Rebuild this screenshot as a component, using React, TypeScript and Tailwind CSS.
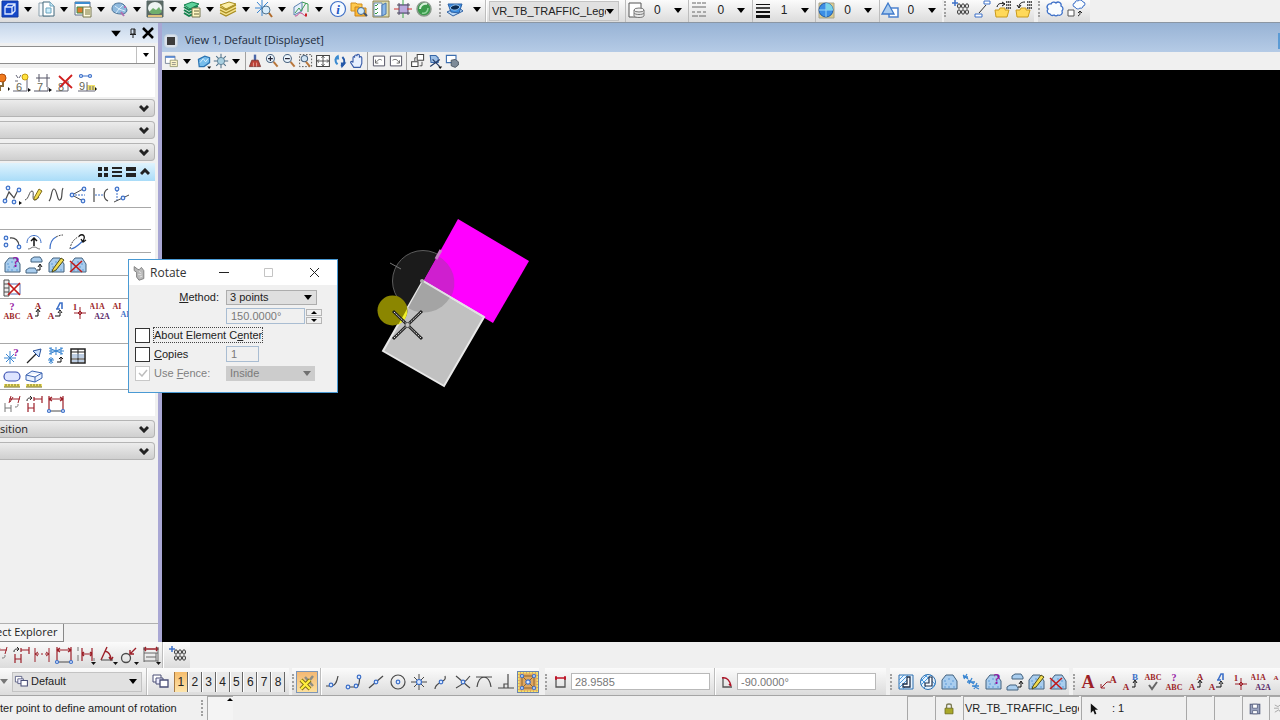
import { useState } from 'react'
import type { ReactNode } from 'react'

const B = '#3d70c8'
const R = '#9c1f28'
const K = '#4a4a4a'

const dot = (x: number, y: number, r = 1.8) => (
  <circle cx={x} cy={y} r={r} fill="#dbe9ff" stroke={B} strokeWidth={1.2} />
)

const label = (x: number, y: number, t: string, size = 9, fill = R) => (
  <text x={x} y={y} fontSize={size} fontWeight="bold" fill={fill} stroke="none" fontFamily="Liberation Serif, serif" textAnchor="middle">
    {t}
  </text>
)

const cloth = <path d="M3 17V8l4-5h7l4 6v8z" fill="#a9cdee" stroke="#44627f" />
const clothDots = <path d="M5 9h2M9 7h2M13 9h2M6 12h2M11 12h2M5 15h2M9 15h2M14 15h2" stroke="#5f9bd8" strokeDasharray="2 1" />

const threes = (x: number, y: number) => (
  <g stroke="#333">
    {[0, 4, 8].map((d) => (
      <g key={d}>
        <ellipse cx={x + d} cy={y} rx={1.5} ry={2.2} />
        <ellipse cx={x + d} cy={y + 6} rx={1.5} ry={2.2} />
      </g>
    ))}
  </g>
)

const folder = <path d="M2 11h4l1-2h5v2h4l-2 7H3z" fill="#ffd95a" stroke="#c99a1c" />
const smallGrid = <path d="M13 3h5M13 6h5M13 9h5" stroke="#555" strokeWidth={2} strokeDasharray="1.5 0.5" />

// All glyphs are drawn on a 20 x 20 grid
const GLYPHS: Record<string, ReactNode> = {
  cube: (
    <>
      <path d="M2 2h16v16H2z" fill="#1648c8" stroke="#1038a0" />
      <path d="M5 8h7v7H5zM5 8l3-3h7v7l-3 3M12 8l3-3" stroke="#dfe9ff" strokeWidth={1.3} />
    </>
  ),
  newFile: (
    <>
      <path d="M3 4h11v13H3z" fill="#f4f8fb" stroke="#8ba0ad" />
      <path d="M7 3h7l4 4v10H7z" fill="#fff" stroke="#41697d" />
      <path d="M14 3v4h4M10 9h5v5h-5z" fill="#cdeefc" stroke="#6aa4be" />
    </>
  ),
  models: (
    <>
      <path d="M2 3h15v13H2z" fill="#fff" stroke="#61718b" />
      <path d="M2 4h15" stroke="#3e8dcf" strokeWidth={2} />
      <path d="M4 8h6v6H4z" fill="#df7b2d" stroke="#3c8f48" />
      <path d="M10 8h8v10h-8z" fill="#fffbe0" stroke="#77764e" />
      <path d="M12 11h5M12 13h5M12 15h5" stroke="#76743b" />
    </>
  ),
  gem: (
    <>
      <path d="M3 10c0-4 3-6 7-6s7 3 8 7c0 3-3 4-6 4s-9-1-9-5z" fill="#8fb9dd" stroke="#4b7398" />
      <path d="M6 7l4 3 4-4M10 10l-3 4M10 10l6 2" stroke="#d8edfb" />
      <path d="M12 13l3 4M15 8h2" stroke="#b06fb0" strokeWidth={2} />
    </>
  ),
  raster: (
    <>
      <path d="M2 2h16v16H2z" fill="#5c6a64" stroke="#566" />
      <ellipse cx={10} cy={9} rx={7} ry={6} fill="#eef4f2" stroke="none" />
      <path d="M4 13l4-4 3 2 3-3 3 5-3 2H7z" fill="#6fae6c" stroke="none" />
      <path d="M3 17h14" stroke="#e0c07c" strokeWidth={2} />
    </>
  ),
  levelsGreen: (
    <>
      <path d="M2 14l5 3 9-4M2 11l5 3 9-4M2 8l5 3 9-4" stroke="#15824e" strokeWidth={2} />
      <path d="M2 6l8-3 7 2-9 5z" fill="#5ed29b" stroke="#15824e" />
      <path d="M10 9h8v9h-8z" fill="#fff6c0" stroke="#777651" />
      <path d="M12 12h5M12 15h5" stroke="#66653e" />
    </>
  ),
  levelsYellow: (
    <>
      <path d="M2 14l6 3 10-5v-7H2z" fill="#f3e08a" stroke="none" />
      <path d="M2 14l6 3 10-5M2 11l6 3 10-5M2 8l6 3 10-5" stroke="#a78c20" strokeWidth={1.2} />
      <path d="M2 6l9-3 7 2-10 5z" fill="#fbeea6" stroke="#a78c20" />
    </>
  ),
  starSearch: (
    <>
      <path d="M8 1v16M1 9h14M3 3l10 11M14 3L3 14" stroke="#3a86d2" />
      <circle cx={12} cy={11} r={4} fill="#d7ecfb" stroke="#4f7390" />
      <path d="M15 14l3 4" stroke="#b06a2a" strokeWidth={2} />
    </>
  ),
  sketch: (
    <>
      <path d="M3 16V8l8-5v9z" fill="#e4effa" stroke="#5c83af" />
      <path d="M11 3l6 2v8M4 14l4-5 2 3 5-8" stroke="#3d9d55" />
      <path d="M4 17c4 0 3-4 6-3s3 4 6 2" stroke="#c03c8c" />
      <path d="M14 16h2" stroke="#c22" strokeWidth={3} />
    </>
  ),
  info: (
    <>
      <circle cx={10} cy={10} r={7.5} fill="#f5f9ff" stroke="#3f70c6" strokeWidth={1.2} />
      <text x={10} y={15} fontSize={13} fontStyle="italic" fontWeight="bold" fill="#2257c4" stroke="none" textAnchor="middle" fontFamily="Liberation Serif, serif">
        i
      </text>
    </>
  ),
  folderSearch: (
    <>
      <path d="M2 4h5l1 1h5v7H2z" fill="#ffc94f" stroke="#d28f1c" />
      <path d="M6 8h4l1 1h6v8H6z" fill="#ffb833" stroke="#c8841c" />
      <circle cx={12} cy={12} r={3.5} fill="#cfe9fa" stroke="#4e6d92" />
      <path d="M15 14l3 3" stroke="#44536a" strokeWidth={2} />
    </>
  ),
  checklist: (
    <>
      <path d="M2 2h16v16H2z" fill="#dcdcb0" stroke="#8d7f48" />
      <path d="M3 4h8v13H3z" fill="#fafcff" stroke="#6a8bb0" />
      <path d="M4 6l1 1 2-2M4 10l1 1 2-2M4 14l1 1 2-2" stroke="#2f9a3c" />
      <path d="M11 6l4-2v11l-4 2z" fill="#8ab7e8" stroke="#4d79b0" />
    </>
  ),
  hash: (
    <>
      <path d="M6 5h9v10H6z" fill="#b9a9dd" stroke="none" />
      <path d="M6 4v12M15 4v12M4 6h13M4 14h13" stroke="#4f4a60" />
      <path d="M10 1v5M10 14v5" stroke="#3aa648" />
      <path d="M1 10h5M14 10h5" stroke="#c33" />
    </>
  ),
  greenBall: (
    <>
      <circle cx={10} cy={10} r={7} fill="#3a9a4b" stroke="#8b9a8d" strokeWidth={1.5} />
      <path d="M6 10c0-4 4-6 7-5" stroke="#d6f2da" strokeWidth={2} />
      <path d="M8 14c3 1 6-1 6-5" stroke="#8fd59b" strokeWidth={1.5} />
    </>
  ),
  eye: (
    <>
      <path d="M2 13l6 4 10-5-5-4z" fill="#b8d6f4" stroke="#2f62a5" />
      <path d="M3 5h14l-3 9-8-1z" fill="#3b8de0" stroke="#2f62a5" />
      <path d="M5 9c3-4 8-4 10-1-3 4-7 4-10 1z" fill="#0b2b52" stroke="#9cc8f2" />
    </>
  ),
  sheetDisk: (
    <>
      <path d="M3 3h12v14H3z" fill="#fff" stroke="#555" />
      <path d="M8 10v6c1 2 9 2 10 0v-6" fill="#e8e8e8" stroke="#777" />
      <ellipse cx={13} cy={10} rx={5} ry={2} fill="#f2f2f2" stroke="#777" />
      <path d="M8 13c1 2 9 2 10 0" stroke="#777" />
    </>
  ),
  dashes: <path d="M3 3h4m1 0h4m1 0h4M3 7h14M3 12h3m2 0h4m2 0h3M3 16h6m1 0h7" stroke="#666" />,
  weights: (
    <g stroke="#111">
      <path d="M3 4.500h14" />
      <path d="M3 8h14" strokeWidth={1.5} />
      <path d="M3 12h14" strokeWidth={2} />
      <path d="M3 16.500h14" strokeWidth={3} />
    </g>
  ),
  sphere: (
    <>
      <path d="M3 3h15v15H3z" fill="#dccb8c" stroke="#a8a48c" />
      <circle cx={10} cy={10} r={7} fill="#3c8ee4" stroke="#225ca8" />
      <path d="M10 3v14M3 10h14" stroke="#9cd8f6" />
      <path d="M10 3a7 7 0 0 1 7 7h-7z" fill="#79d4e8" stroke="none" />
    </>
  ),
  triangle: (
    <>
      <path d="M9 8h9v9H9z" fill="#fff" stroke="#4d83cf" strokeWidth={1.5} />
      <path d="M2 14L8 3l6 11z" fill="#a9cbef" stroke="#3f7acb" strokeWidth={1.3} />
    </>
  ),
  groupStar: (
    <>
      <path d="M4 1v6M1 4h6" stroke={B} strokeWidth={1.5} />
      {threes(8, 7)}
    </>
  ),
  link: (
    <>
      <path d="M3 15h7v3H3zM12 2h6v3h-6z" fill="#fff" stroke={B} />
      <path d="M7 14l7-8" stroke="#333" />
    </>
  ),
  folderIn: (
    <>
      {folder}
      {smallGrid}
      <path d="M4 8c1-4 4-4 7-3M9 3l3 2-3 2" stroke="#111" />
    </>
  ),
  folderOut: (
    <>
      {folder}
      {smallGrid}
      <path d="M11 3C7 3 5 5 5 8M3 6l2 3 2-3" stroke="#111" />
    </>
  ),
  cloud: (
    <path
      d="M5 15a3 3 0 0 1-2-5 3 3 0 0 1 3-5 3 3 0 0 1 5-1 3 3 0 0 1 5 3 3 3 0 0 1 1 5 3 3 0 0 1-4 4 3 3 0 0 1-4 0 3 3 0 0 1-4-1z"
      fill="#fafdff"
      stroke={B}
      strokeWidth={1.3}
    />
  ),
  cloudBox: (
    <>
      <path d="M9 8a2 2 0 0 1 0-4 2 2 0 0 1 3-2 3 3 0 0 1 5 1 2 2 0 0 1 0 4 2 2 0 0 1-3 2 3 3 0 0 1-5-1z" fill="#fafdff" stroke={B} />
      <path d="M2 11h6v6H2z" fill="#fff" stroke="#555" />
      <path d="M12 17c2-1 2-2 2-4M12 14l2-2 2 2" stroke="#222" />
    </>
  ),
  viewSheet: (
    <>
      <path d="M3 4h12v9H3z" fill="#fff" stroke="#66748c" />
      <path d="M3 5h12" stroke="#4a7fd0" strokeWidth={2} />
      <path d="M9 9h9v8H9z" fill="#fff7c9" stroke="#8a8f66" />
      <path d="M11 12h5M11 14.500h5" stroke="#777" />
    </>
  ),
  style: (
    <>
      <path d="M3 8l8-4 6 2v6l-7 5H4z" fill="#77bdeb" stroke="#2c74b2" strokeWidth={1.5} />
      <path d="M5 12l4-5 3 4 3-4" stroke="#e9f8ff" />
      <path d="M14 17h5l-2.500 3z" fill="#111" stroke="none" />
    </>
  ),
  sun: (
    <>
      <path d="M10 1v18M1 10h18M4 4l12 12M16 4L4 16" stroke="#4d6f88" strokeWidth={1.3} />
      <circle cx={10} cy={10} r={4.5} fill="#a8cfe0" stroke="#56788e" />
    </>
  ),
  brush: (
    <>
      <path d="M10 2v8" stroke="#4b67a8" strokeWidth={3} />
      <path d="M6 9h8l3 8H3z" fill="#bb4238" stroke="#74302c" />
      <path d="M8 12v5M12 12v5" stroke="#efb6ae" />
    </>
  ),
  zoomIn: (
    <>
      <circle cx={8} cy={7} r={5} fill="#eaf4fc" stroke="#4b6480" strokeWidth={1.3} />
      <path d="M8 4v6M5 7h6" stroke="#223" strokeWidth={1.5} />
      <path d="M12 11l5 6" stroke="#b9773c" strokeWidth={2.5} />
    </>
  ),
  zoomOut: (
    <>
      <circle cx={8} cy={7} r={5} fill="#eaf4fc" stroke="#4b6480" strokeWidth={1.3} />
      <path d="M5 7h6" stroke="#223" strokeWidth={1.5} />
      <path d="M12 11l5 6" stroke="#b9773c" strokeWidth={2.5} />
    </>
  ),
  zoomArea: (
    <>
      <path d="M2 2h15v15H2z" stroke="#333" strokeDasharray="2 2" />
      <circle cx={8} cy={7} r={4} fill="#cfe3f3" stroke="#4b6480" strokeWidth={1.3} />
      <path d="M10 11l5 6" stroke="#b9773c" strokeWidth={2.5} />
    </>
  ),
  fit: (
    <>
      <path d="M2 3h16v14H2z" fill="#fff" stroke="#444" strokeWidth={1.3} />
      <path d="M10 4v12M3 10h14M8 6l2-2 2 2M8 14l2 2 2-2M5 8l-2 2 2 2M15 8l2 2-2 2" stroke="#333" />
    </>
  ),
  rotateView: (
    <>
      <path d="M8 4c-4 1-5 7-1 10" stroke="#3c8bd0" strokeWidth={2.5} />
      <path d="M3 8l5-6 1 6z" fill="#3c8bd0" stroke="none" />
      <path d="M11 16c5-1 6-7 2-11" stroke="#2458a8" strokeWidth={2.5} />
      <path d="M18 12l-6 7-1-7z" fill="#2458a8" stroke="none" />
    </>
  ),
  hand: (
    <path
      d="M6 18l-4-6c0-2 2-2 3 0V6c0-2 2-2 2 0V4c0-2 3-2 3 0V3c0-2 3-2 3 0v3c0-2 3-2 3 0v7l-2 5z"
      fill="#e9f1ff"
      stroke="#3a5da8"
      strokeWidth={1.4}
    />
  ),
  viewPrev: (
    <>
      <path d="M2 3h16v14H2z" fill="#fff" stroke="#556" strokeWidth={1.4} />
      <path d="M5 13V8M5 13h4M6 12c3-5 6-5 8-3" stroke="#333" />
    </>
  ),
  viewNext: (
    <>
      <path d="M2 3h16v14H2z" fill="#fff" stroke="#556" strokeWidth={1.4} />
      <path d="M15 13V9M15 13h-4M14 12c-2-5-6-5-9-3" stroke="#333" />
    </>
  ),
  copyView: (
    <>
      <path d="M9 2h8v7H9zM2 11h8v6H2z" fill="#fff" stroke="#444" strokeWidth={1.3} />
      <path d="M12 16h3v-5M6 10V6h2" stroke="#333" />
    </>
  ),
  clipView: (
    <>
      <path d="M4 3h7l3 3v6H5z" fill="#9dbfe6" stroke="#3767a8" strokeWidth={1.3} />
      <path d="M4 17L16 8M7 8l9 9" stroke="#223a66" strokeWidth={1.5} />
      <path d="M14 17h5l-2.500 3z" fill="#111" stroke="none" />
    </>
  ),
  maskView: (
    <>
      <path d="M3 3h12v9H3z" fill="#fff" stroke="#3e6fb0" strokeWidth={1.4} />
      <path d="M9 9l5-1 4 3v4l-4 3-5-2z" fill="#7e8b98" stroke="#3f4954" />
    </>
  ),
  bulb6: (
    <>
      <path d="M1 18h14V6M4 2l2 3M9 2L7 5M3 8h3" stroke="#667" />
      <circle cx={13} cy={4} r={3} fill="#ffe13c" stroke="#c39a12" />
      <text x={7} y={18} fontSize={11} fill="#665" stroke="none" textAnchor="middle" fontFamily="Liberation Sans">6</text>
      <path d="M16 15l3 2-3 2z" fill="#111" stroke="none" />
    </>
  ),
  fence7: (
    <>
      <path d="M3 5h14M6 1v8M14 1v13M1 18h14v-4" stroke="#556" />
      <text x={7} y={18} fontSize={11} fill="#665" stroke="none" textAnchor="middle" fontFamily="Liberation Sans">7</text>
      <path d="M16 15l3 2-3 2z" fill="#111" stroke="none" />
    </>
  ),
  delete8: (
    <>
      <path d="M1 18h12V8" stroke="#667" />
      <text x={6} y={18} fontSize={11} fill="#665" stroke="none" textAnchor="middle" fontFamily="Liberation Sans">8</text>
      <path d="M4 3l13 12M17 2L5 14" stroke="#d01f1f" strokeWidth={1.8} />
    </>
  ),
  ruler9: (
    <>
      <path d="M5 3h7" stroke={B} />
      {dot(4, 3, 1.5)}
      {dot(13, 3, 1.5)}
      <path d="M10 12h8v5h-8z" fill="#efe06b" stroke="none" />
      <path d="M1 18h17M10 9v9M13 13v4M16 13v4" stroke="#667" />
      <text x={5} y={17} fontSize={11} fill="#665" stroke="none" textAnchor="middle" fontFamily="Liberation Sans">9</text>
      <path d="M18 14l2 2-2 2z" fill="#111" stroke="none" />
    </>
  ),
  orangeBall: (
    <>
      <circle cx={12} cy={5} r={4} fill="#f07a1c" stroke="#b04b0c" />
      <path d="M13 9v4h-3v5" stroke="#876a3a" strokeWidth={2} />
      <path d="M18 14l2 2-2 2z" fill="#111" stroke="none" />
    </>
  ),
  polyline: (
    <>
      <path d="M3 16l4-9 5 6 4-8" stroke={K} strokeWidth={1.2} />
      {dot(6, 3)}
      {dot(17, 5)}
      {dot(3, 16)}
      {dot(12, 17)}
      <path d="M17 16l3 2-3 2z" fill="#111" stroke="none" />
    </>
  ),
  pencilLine: (
    <>
      <path d="M1 15c4-1 4-9 7-9s-1 9 3 9c2 0 3-2 4-3" stroke={K} />
      <path d="M10 13l5-9 3 2-5 8-3 1z" fill="#f2dc4e" stroke="#7c6a1c" />
    </>
  ),
  nCurve: <path d="M3 16C6 13 5 4 8 4s3 12 6 11 1-9 3-12" stroke={K} strokeWidth={1.2} />,
  branch: (
    <>
      <path d="M4 10h13" stroke={B} strokeDasharray="2 1" />
      <path d="M15 4L4 10l11 6" stroke={K} />
      {dot(16, 4)}
      {dot(4, 10)}
      {dot(15, 16)}
    </>
  ),
  bisect: (
    <>
      <path d="M4 3v14M18 4c-5 2-5 10 0 12" stroke={K} strokeWidth={1.2} />
      <path d="M5 10h9" stroke={B} strokeDasharray="2 1" />
    </>
  ),
  perp: (
    <>
      <path d="M5 5v12" stroke={B} strokeDasharray="2 1" />
      <path d="M2 17l15-7" stroke={K} />
      {dot(5, 4)}
      {dot(11, 13)}
    </>
  ),
  arc3: (
    <>
      <path d="M8 6c5-1 9 3 9 8" stroke={K} strokeWidth={1.3} />
      {dot(4, 6)}
      {dot(4, 13)}
      {dot(17, 15)}
    </>
  ),
  arcUp: (
    <>
      <path d="M3 11C3 1 17 1 17 11" stroke={B} />
      <path d="M4 17c3 0 3-2 6-2s3 2 6 2" stroke="#777" />
      <path d="M10 14V7M7 9l3-3 3 3" stroke="#111" strokeWidth={1.5} />
    </>
  ),
  arcExt: (
    <>
      <path d="M4 17C4 11 6 7 10 5" stroke={B} strokeWidth={1.2} />
      <path d="M10 5c2-1 4-2 7-2" stroke={K} strokeDasharray="2 1" />
    </>
  ),
  offset: (
    <>
      <path d="M2 17C3 10 7 6 12 4" stroke={K} strokeDasharray="2 1" />
      <path d="M3 17C8 16 11 12 15 9" stroke={B} strokeWidth={1.2} />
      <path d="M11 4c4-3 7 0 4 5M13 7l2 3 3-2" stroke="#111" strokeWidth={1.3} />
    </>
  ),
  cloth: (
    <>
      {cloth}
      {clothDots}
    </>
  ),
  clothQ: (
    <>
      {cloth}
      {clothDots}
      {label(14, 12, '?', 14, '#9314a3')}
    </>
  ),
  clothUp: (
    <>
      <path d="M7 7V4l3-2h6l2 3v2zM2 18v-3l3-2h6l2 3v2z" fill="#a9cdee" stroke="#44627f" />
      <path d="M13 15h3v-5M14 12l2-3 2 3" stroke="#111" />
    </>
  ),
  clothPen: (
    <>
      {cloth}
      {clothDots}
      <path d="M7 14l8-11 3 2-8 10-4 2z" fill="#f2dc4e" stroke="#4d4a1c" />
    </>
  ),
  clothX: (
    <>
      {cloth}
      {clothDots}
      <path d="M2 6l12 11M14 6L2 17" stroke="#c01a1a" strokeWidth={1.6} />
    </>
  ),
  gridX: (
    <>
      <path d="M2 2h5v16H2zM2 6h5M2 10h5M2 14h5" fill="#eee" stroke={K} />
      <path d="M7 6h11v10H7" stroke="#5a6cb0" />
      <path d="M6 5l12 12M18 5L6 17" stroke="#c01a1a" strokeWidth={1.7} />
    </>
  ),
  abcQ: (
    <>
      {label(10, 9, '?', 10, '#9314a3')}
      {label(10, 18, 'ABC', 8)}
    </>
  ),
  aUp: (
    <>
      {label(14, 8, 'A', 9)}
      {label(6, 18, 'A', 9)}
      <path d="M11 15h3V9M12 11l2-3 2 3" stroke="#111" />
    </>
  ),
  aMatch: (
    <>
      {label(5, 18, 'A', 9)}
      <path d="M11 8l3-6h2v6M10 8h4" stroke={B} strokeWidth={1.6} />
      <path d="M9 15h5v-4M12 12l2-3 2 3" stroke="#111" />
    </>
  ),
  bUp: (
    <>
      {label(14, 8, 'B', 9, B)}
      {label(5, 18, 'A', 9)}
      <path d="M11 15h3V9M12 11l2-3 2 3" stroke="#111" />
    </>
  ),
  oneTarget: (
    <>
      {label(7, 9, '1', 9)}
      <path d="M12 6v12M6 12h12M10 12l2-2 2 2-2 2z" fill="#fff" stroke={R} />
    </>
  ),
  a1a2: (
    <>
      {label(7, 8, 'A1A', 8)}
      {label(12, 18, 'A2A', 8, '#5a2a6a')}
    </>
  ),
  a1a1: (
    <>
      {label(5, 8, 'AI', 8)}
      {label(13, 16, 'AI', 8, B)}
    </>
  ),
  aEdge: label(4, 8, 'A', 7),
  bigA: label(10, 16, 'A', 18),
  aLeader: (
    <>
      {label(14, 11, 'A', 10)}
      <path d="M2 16l6-6h3M2 12v4h4" stroke={R} />
    </>
  ),
  abcCheck: (
    <>
      {label(10, 8, 'ABC', 8)}
      <path d="M6 13l3 4 5-7" stroke="#666" strokeWidth={2} />
    </>
  ),
  starQ: (
    <>
      <path d="M8 5v13M2 12h12M4 8l8 8M12 8l-8 8" stroke="#3a86d2" />
      {label(14, 10, '?', 11, '#9314a3')}
    </>
  ),
  arrowBox: (
    <>
      <path d="M3 17L13 7" stroke="#222" strokeWidth={1.3} />
      <path d="M9 5l8-2-2 8z" fill="#cfe3ff" stroke="#264f9a" />
    </>
  ),
  starsUp: (
    <>
      <path d="M3 5h15M5 1v8M10 1v8M15 1v8M3 2l14 6M3 8l14-6M5 11v7M2 14h6M3 12l4 5M7 12l-4 5" stroke="#3a86d2" />
      <path d="M11 16h4v-4M13 13l2-2 2 2" stroke="#111" />
    </>
  ),
  table: (
    <>
      <path d="M3 3h14v14H3z" fill="#fff" stroke="#222" strokeWidth={1.5} />
      <path d="M3 6h14M3 13h14M10 3v14" stroke="#222" />
      <path d="M4 9h12M4 11h12M4 15h12" stroke="#7f9ec8" />
    </>
  ),
  pill: (
    <>
      <rect x={2} y={3} width={16} height={9} rx={4.5} fill="#dde4ff" stroke="#3a4fb0" strokeWidth={1.2} />
      <path d="M2 15h16v3H2z" fill="#f0e26a" stroke="none" />
      <path d="M2 18h16M4 15v2M7 15v2M10 15v2M13 15v2M16 15v2" stroke="#777024" />
    </>
  ),
  slab: (
    <>
      <path d="M2 6l6-4 10 2v5l-7 4-9-2zM2 6l9 2 7-4M11 8v5" fill="#e9f1ff" stroke="#3a62b0" />
      <path d="M2 15h16v3H2z" fill="#f0e26a" stroke="none" />
      <path d="M2 18h16M4 15v2M7 15v2M10 15v2M13 15v2M16 15v2" stroke="#777024" />
    </>
  ),
  dimA: (
    <>
      <path d="M9 2l-2 7M18 2l-2 7M7 5h11M11 3l-3 5" stroke={R} />
      <path d="M3 9v9M9 11v7M3 14h6M13 13c3 0 3-1 3-3" stroke="#777" />
    </>
  ),
  dimB: (
    <>
      <path d="M10 5h8M18 2v7M10 3v4M4 9v9M10 9v9M4 14h6" stroke={R} strokeWidth={1.2} />
      <path d="M3 7c0-3 2-3 4-3M6 2l2 2-2 2" stroke="#222" />
    </>
  ),
  dimC: <path d="M3 3v14M17 3v14M3 9h4m2 0h2m2 0h4M6 7L3 9l3 2M14 7l3 2-3 2" stroke={R} />,
  dimBox: (
    <>
      <path d="M3 2v15M17 2v15M3 5h14M6 3L3 5l3 2M14 3l3 2-3 2" stroke={R} strokeWidth={1.2} />
      <path d="M3 17h14" stroke={K} />
      {dot(3, 17, 1.5)}
      {dot(17, 17, 1.5)}
    </>
  ),
  dimD: (
    <>
      <path d="M6 3v13M16 3v13M6 9h10M8 7L6 9l2 2M14 7l2 2-2 2" stroke={R} strokeWidth={1.2} />
      <path d="M2 2v4M2 10v6M18 13v3" stroke="#777" />
      <path d="M15 17h5l-2.500 3z" fill="#111" stroke="none" />
    </>
  ),
  dimAngle: (
    <>
      <path d="M3 15L9 2M7 6c4 1 6 5 6 9M11 12l2 3 2-3" stroke={R} strokeWidth={1.4} />
      <path d="M3 15h12" stroke={K} />
      <path d="M15 17h5l-2.500 3z" fill="#111" stroke="none" />
    </>
  ),
  dimRadius: (
    <>
      <circle cx={7} cy={13} r={4.5} stroke={K} strokeWidth={1.3} />
      <path d="M17 3l-6 6M11 5v4h4" stroke={R} strokeWidth={1.4} />
      <path d="M15 17h5l-2.500 3z" fill="#111" stroke="none" />
    </>
  ),
  dimOrd: (
    <>
      <path d="M3 4h14M5 2L3 4l2 2M15 2l2 2-2 2" stroke={R} strokeWidth={1.3} />
      <path d="M3 2v15M17 2v15M3 8h14M5 12h10M3 16h14M15 8v8" stroke="#666" />
      <path d="M15 17h5l-2.500 3z" fill="#111" stroke="none" />
    </>
  ),
  layers: (
    <>
      <path d="M3 3h8v7H3z" fill="#fff" stroke="#4a4f77" />
      <path d="M6 6h7v6H6z" fill="#eef" stroke="#4a4f77" />
      <path d="M10 8h8v7h-8z" fill="#fff" stroke="#4a4f77" strokeWidth={1.3} />
    </>
  ),
  snapX: (
    <>
      <path d="M8 5l8 9M16 4l-7 9" stroke="#8d8d85" strokeWidth={2.5} />
      <path d="M4 8l9 9M13 8l-9 9" stroke="#796a10" strokeWidth={4} />
      <path d="M4 8l9 9M13 8l-9 9" stroke="#ffee3c" strokeWidth={2.4} />
    </>
  ),
  snapNear: (
    <>
      <path d="M3 14h6c4-1 5-5 6-10" stroke={K} strokeWidth={1.2} />
      {dot(8, 13)}
    </>
  ),
  snapKey: (
    <>
      <path d="M4 15h9c3-2 2-7 3-10" stroke={K} strokeWidth={1.2} />
      {dot(4, 15)}
      {dot(12, 14)}
      {dot(15, 5)}
    </>
  ),
  snapMid: (
    <>
      <path d="M3 16L17 4" stroke={K} strokeWidth={1.3} />
      {dot(10, 10)}
    </>
  ),
  snapCenter: (
    <>
      <circle cx={10} cy={10} r={7} stroke={K} strokeWidth={1.2} />
      {dot(10, 10)}
    </>
  ),
  snapOrigin: (
    <>
      <path d="M10 2v16M2 10h16M5 5l10 10M15 5L5 15" stroke={K} />
      {dot(10, 10, 2.5)}
    </>
  ),
  snapBisect: (
    <>
      <path d="M4 17c0-4 3-5 6-7s5-2 4-6" stroke={K} strokeWidth={1.2} />
      {dot(10, 10)}
    </>
  ),
  snapInt: (
    <>
      <path d="M3 4c5 4 10 9 14 12M17 4C13 9 9 13 3 16" stroke={K} strokeWidth={1.2} />
      {dot(10, 10)}
    </>
  ),
  snapTan: <path d="M2 5h16M3 15C5 2 15 2 17 15" stroke={K} strokeWidth={1.2} />,
  snapPerp: <path d="M2 16h16M12 2v14M8 16v-4h4" stroke={K} strokeWidth={1.2} />,
  snapMulti: (
    <>
      <path d="M0 0h20v20H0z" stroke="#f4e46a" strokeWidth={3} strokeDasharray="2 1" />
      <path d="M4 4l12 12M16 4L4 16M4 4h12v12H4z" stroke="#8b6330" />
      {dot(10, 10, 2.2)}
      {dot(4, 4, 1.5)}
      {dot(16, 4, 1.5)}
      {dot(4, 16, 1.5)}
      {dot(16, 16, 1.5)}
    </>
  ),
  lengthIcon: (
    <>
      <path d="M5 5v10h9V5" stroke="#555" strokeWidth={1.3} />
      <path d="M4 6h11M5 4v4M14 4v4" stroke="#c01226" strokeWidth={1.5} />
    </>
  ),
  angleIcon: (
    <>
      <path d="M6 5v10h9" stroke="#555" strokeWidth={1.3} />
      <path d="M5 6c5-1 8 3 9 8M12 12l2 2" stroke="#b01226" strokeWidth={1.5} />
    </>
  ),
  hatch: (
    <>
      <path d="M3 3h14v14H3z" fill="#e6f3ff" stroke="#2d6fae" />
      <path d="M3 8l5-5M3 12l9-9M3 16l8-8M7 17l4-4" stroke="#4b98dc" />
      <path d="M14 5v10H7v-3h4V5z" fill="#fff" stroke="#1d2e4a" strokeWidth={1.3} />
    </>
  ),
  crossHatch: (
    <>
      <circle cx={10} cy={10} r={7.5} fill="#e6f3ff" stroke="#2d6fae" />
      <path d="M3 9l6-6M3 13L13 3M6 16l4-4M7 3l10 9M3 7l6 6M14 16l3-4" stroke="#4b98dc" />
      <path d="M14 5v9H7v-3h4V5z" fill="#fff" stroke="#1d2e4a" strokeWidth={1.2} />
    </>
  ),
  starLine: <path d="M2 3l5 4M3 7l3-5M2 5h5M7 8l6 4M8 12l3-6M6 10h8M12 14l6 3M13 17l3-6M11 14h7" stroke="#3a86d2" strokeWidth={1.3} />,
  lock: (
    <>
      <path d="M7 9V6c0-3 6-3 6 0v3" stroke="#7c7c55" strokeWidth={1.6} />
      <path d="M5 9h10v7H5z" fill="#a9a82a" stroke="#6c6b1c" />
    </>
  ),
  pointer: <path d="M6 3v12l3-3 2 5 2-1-2-5h4z" fill="#111" stroke="none" />,
  disk: (
    <>
      <path d="M4 4h12v12H4z" fill="#9aa3c0" stroke="#555e7d" strokeWidth={1.3} />
      <path d="M7 4h6v5H7zM7 12h6v4H7z" fill="#fff" stroke="#555e7d" />
    </>
  ),
  gear: <path d="M6 5l4 2 4-3M5 9h6M6 14l5-3 3 4" stroke="#999" />,
  wrench: (
    <>
      <path d="M4 2v5l3 2v6l3 4 6-2V7l-3-4-3 3-2-1z" fill="#b9b9b9" stroke="#7f7f7f" strokeWidth={1.2} />
      <path d="M10 8l3 2M9 12h4M11 15l3-1" stroke="#e2e2e2" strokeWidth={1.2} />
    </>
  ),
}

function Icon({ name, className = 'size-5' }: { name: string; className?: string }) {
  return (
    <svg viewBox="0 0 20 20" fill="none" className={`shrink-0 ${className}`} aria-hidden="true">
      {GLYPHS[name]}
    </svg>
  )
}

function Caret({ className = 'text-black' }: { className?: string }) {
  return (
    <svg viewBox="0 0 8 5" className={`h-[5px] w-2 shrink-0 ${className}`} aria-hidden="true">
      <path d="M0 0h8L4 5z" fill="currentColor" />
    </svg>
  )
}

function ToolButton({ name, size = 'size-5' }: { name: string; size?: string }) {
  return (
    <button type="button" title={name} className="flex items-center justify-center">
      <Icon name={name} className={size} />
    </button>
  )
}

function Grip() {
  return <span className="h-4 w-0 shrink-0 border-l-2 border-dotted border-[#a0a0a0]" />
}

function Separator() {
  return <span className="w-0.5 shrink-0 self-stretch border-l border-[#bdbdbd] bg-white" />
}

const BAR = 'bg-linear-to-b from-[#fbfbfb] to-[#dcdcdc]'

const MAIN_TOOLS = ['cube', 'newFile', 'models', 'gem', 'raster', 'levelsGreen', 'levelsYellow', 'starSearch', 'sketch']
const ATTRIBUTES = [
  { icon: 'sheetDisk', label: 'Template', value: '0' },
  { icon: 'dashes', label: 'Line style', value: '0' },
  { icon: 'weights', label: 'Line weight', value: '1' },
  { icon: 'sphere', label: 'Transparency', value: '0' },
  { icon: 'triangle', label: 'Priority', value: '0' },
]

function MainToolbar() {
  return (
    <header className="flex h-[23px] shrink-0 items-start overflow-hidden border-b border-[#8b96a3] bg-[#f0f0f0]">
      <div className={`flex h-[22px] items-center pb-1 ${BAR}`}>
        <div className="grid w-[327px] grid-cols-9">
          {MAIN_TOOLS.map((name) => (
            <button key={name} type="button" title={name} className="flex items-center gap-1">
              <Icon name={name} />
              <Caret />
            </button>
          ))}
        </div>
        <div className="grid w-[108px] grid-cols-5">
          {['info', 'folderSearch', 'checklist', 'hash', 'greenBall'].map((name) => (
            <ToolButton key={name} name={name} />
          ))}
        </div>
        <div className="ml-1 flex items-center gap-1">
          <Grip />
          <Icon name="eye" />
          <Caret className="ml-1 text-black" />
        </div>
      </div>
      <div className={`flex h-[22px] items-center gap-0.5 pr-1.5 pl-1 ${BAR}`}>
        <Separator />
        <label className="flex h-5 w-[130px] items-center justify-between border border-[#c3c3c3] bg-[#e1e1e1] pr-1 pl-0.5">
          <select aria-label="Active level" className="w-[114px] appearance-none overflow-hidden bg-transparent outline-none">
            <option>VR_TB_TRAFFIC_Lege</option>
          </select>
          <Caret />
        </label>
      </div>
      <div className={`grid h-[22px] w-[317px] grid-cols-5 ${BAR}`}>
        {ATTRIBUTES.map((a) => (
          <label key={a.icon} className="flex items-center gap-2 border-l border-[#bdbdbd] pb-1">
            <Icon name={a.icon} />
            <select aria-label={a.label} className="w-3 appearance-none bg-transparent text-[12px] outline-none">
              <option>{a.value}</option>
            </select>
            <Caret />
          </label>
        ))}
      </div>
      <div className={`ml-0.5 flex h-[22px] items-center gap-1 pb-1 ${BAR}`}>
        <Grip />
        <div className="grid w-[84px] grid-cols-4">
          {['groupStar', 'link', 'folderIn', 'folderOut'].map((name) => (
            <ToolButton key={name} name={name} />
          ))}
        </div>
      </div>
      <div className={`ml-1 flex h-[22px] items-center gap-1 pr-1 pb-1 ${BAR}`}>
        <Grip />
        <div className="grid w-[42px] grid-cols-2">
          <ToolButton name="cloud" />
          <ToolButton name="cloudBox" />
        </div>
      </div>
    </header>
  )
}

function Chevron({ up = false }: { up?: boolean }) {
  return (
    <svg viewBox="0 0 10 8" className="h-2 w-2.5" fill="none" stroke="#222" strokeWidth={3} aria-hidden="true">
      <path d={up ? 'M1 6l4-4 4 4' : 'M1 2l4 4 4-4'} />
    </svg>
  )
}

function Section({ title = '' }: { title?: string }) {
  return (
    <button
      type="button"
      aria-label={title || 'Task group'}
      className="mr-[3px] flex h-[18px] shrink-0 items-center justify-between rounded-r-sm border border-l-0 border-[#b4b4b4] bg-linear-to-b from-[#ececec] to-[#cfcfcf] pr-[5px] font-['Open_Sans',sans-serif] text-[#222]"
    >
      <span>{title}</span>
      <Chevron />
    </button>
  )
}

const TASK_ROWS: { height: string; icons: string[] }[] = [
  { height: 'h-[27px] pt-1', icons: ['polyline', 'pencilLine', 'nCurve', 'branch', 'bisect', 'perp'] },
  { height: 'h-[22px]', icons: [] },
  { height: 'h-[23px] pt-0.5', icons: ['arc3', 'arcUp', 'arcExt', 'offset'] },
  { height: 'h-[23px] pt-0.5', icons: ['clothQ', 'clothUp', 'clothPen', 'clothX'] },
  { height: 'h-[23px] pt-0.5', icons: ['gridX'] },
  { height: 'h-[45px] pt-0.5', icons: ['abcQ', 'aUp', 'aMatch', 'oneTarget', 'a1a2', 'a1a1'] },
  { height: 'h-[23px] pt-0.5', icons: ['starQ', 'arrowBox', 'starsUp', 'table'] },
  { height: 'h-[23px] pt-0.5', icons: ['pill', 'slab'] },
  { height: 'h-[26px] pt-1 border-transparent', icons: ['dimA', 'dimB', 'dimBox'] },
]

function TaskPanel() {
  return (
    <aside className="flex w-[162px] shrink-0 flex-col overflow-hidden border-r-4 border-[#a9a7d4] bg-[#f0f0f0]">
      <div className="flex h-5 shrink-0 items-center justify-end gap-1 bg-linear-to-b from-[#c5d6ea] to-[#e6eef8] pr-1">
        <Caret className="mr-1 scale-125 text-black" />
        <svg viewBox="0 0 10 12" className="h-3 w-2.5" fill="none" stroke="#222" aria-hidden="true">
          <path d="M3 2h4v5H3zM2 7.500h6M5 8v3M6 2v5" />
        </svg>
        <button type="button" aria-label="Close tasks">
          <svg viewBox="0 0 12 12" className="size-3" stroke="#000" strokeWidth={2.5} aria-hidden="true">
            <path d="M1 1l10 10M11 1L1 11" />
          </svg>
        </button>
      </div>
      <label className="mt-[3px] mr-[3px] flex h-[18px] shrink-0 items-center border border-l-0 border-[#8f8f8f] bg-white">
        <input aria-label="Search tasks" className="h-full w-0 flex-1 outline-none" />
        <span className="flex h-full w-[18px] items-center justify-center border-l border-[#c0c0c0]">
          <svg viewBox="0 0 6 4" className="h-1 w-1.5" aria-hidden="true">
            <path d="M0 0h6L3 4z" />
          </svg>
        </span>
      </label>
      <div className="mt-1 mr-[3px] mb-0.5 flex h-[29px] shrink-0 items-center bg-white">
        <div className="-ml-[11px] grid w-[109px] grid-cols-5">
          {['orangeBall', 'bulb6', 'fence7', 'delete8', 'ruler9'].map((name) => (
            <ToolButton key={name} name={name} />
          ))}
        </div>
      </div>
      <div className="flex flex-col gap-1">
        <Section />
        <Section />
        <Section />
      </div>
      <div className="mt-0.5 mr-[3px] flex h-[18px] shrink-0 items-center justify-end gap-1 bg-linear-to-b from-[#dff3fd] to-[#a9dcf8] pr-[5px]">
        <svg viewBox="0 0 38 10" className="h-2.5 w-[38px]" fill="#222" aria-hidden="true">
          <path d="M0 0h4v4H0zM6 0h4v4H6zM0 6h4v4H0zM6 6h4v4H6zM14 0h10v2H14zM14 4h10v2H14zM14 8h10v2H14zM28 0h10v4H28zM28 6h10v4H28z" />
        </svg>
        <Chevron up />
      </div>
      <div className="mr-[3px] flex shrink-0 flex-col bg-white pr-1">
        {TASK_ROWS.map((row, i) => (
          <div key={i} className={`flex items-start border-b border-[#a8a8a8] ${row.height}`}>
            <div className="ml-0.5 flex gap-0.5">
              {row.icons.map((name) => (
                <ToolButton key={name} name={name} />
              ))}
            </div>
          </div>
        ))}
      </div>
      <div className="mt-1 flex flex-col gap-1">
        <Section title="sition" />
        <Section />
      </div>
      <div className="mt-auto flex border-t border-[#b0b0b0]">
        <button type="button" className="-ml-1 h-[18px] border-r border-b border-[#888] bg-[#f4f4f4] pr-1.5 font-['Open_Sans',sans-serif] text-[#222]">
          ect Explorer
        </button>
      </div>
    </aside>
  )
}

function Drawing() {
  return (
    <svg className="h-full w-full" fill="none" aria-label="Drawing area">
      <g transform="translate(-162 -70)">
        <circle cx={423} cy={281} r={30.5} fill="#1b1b1b" stroke="#5c5c5c" />
        <path d="M458 219L529 261L493 323L423 282Z" fill="#ff00ff" />
        <path d="M438 256A30.500 30.500 0 0 1 450.500 298L423 282Z" fill="#cf1fcf" />
        <path d="M436 259L441 250" stroke="#c77fc7" strokeWidth={3} />
        <path d="M423 281L484 317L444 386L383 351Z" fill="#c1c1c1" stroke="#e8e8e8" strokeWidth={2} />
        <path d="M423 281L450 297.500A30.500 30.500 0 0 1 408 308Z" fill="#a4a4a4" />
        <path d="M423 281L484 317" stroke="#e2dfe4" strokeWidth={2} />
        <circle cx={392.5} cy={310.5} r={15} fill="#8b8600" />
        <path d="M407 309A15 15 0 0 1 398 325Z" fill="#efef2c" />
        <circle cx={422} cy={281} r={2} fill="#aaa" />
        <path d="M390 263l11 6" stroke="#777" />
        <path d="M393 311l29 28M422 311l-29 28" stroke="#222" strokeWidth={3} />
        <path d="M394 312l27 26M421 312l-27 26" stroke="#ddd" strokeDasharray="2 1" />
        <circle cx={407.5} cy={325} r={2.5} fill="#c1c1c1" stroke="#555" />
      </g>
    </svg>
  )
}

function ViewWindow() {
  return (
    <main className="flex min-w-0 flex-1 flex-col">
      <div className="flex h-[29px] shrink-0 items-center bg-linear-to-b from-[#98b3d5] to-[#b5cbe6] pt-1.5 font-['Open_Sans',sans-serif] text-[#1d2c3c]">
        <span className="mr-[7px] ml-0.5 flex size-3.5 items-center justify-center rounded-sm border border-[#c4d2e2] bg-[#d9e1ea]">
          <span className="size-2 bg-[#3c3c3c]" />
        </span>
        <h1>View 1, Default [Displayset]</h1>
        <span className="ml-auto h-4 w-0.5 bg-[#5b9bd5]" />
      </div>
      <div className="flex h-[18px] shrink-0 items-center bg-[#f0f0f0] pl-px">
        <ToolButton name="viewSheet" size="size-4" />
        <Caret className="mx-1 text-black" />
        <div className="grid w-[34px] grid-cols-2">
          <ToolButton name="style" size="size-4" />
          <ToolButton name="sun" size="size-4" />
        </div>
        <Caret className="mr-[5px] ml-[3px] text-black" />
        <span className="h-full border-l border-[#a0a0a0]" />
        <div className="grid w-[119px] grid-cols-7">
          {['brush', 'zoomIn', 'zoomOut', 'zoomArea', 'fit', 'rotateView', 'hand'].map((name) => (
            <ToolButton key={name} name={name} size="size-4" />
          ))}
        </div>
        <span className="mx-0.5 h-full border-l border-[#a0a0a0]" />
        <div className="grid w-[34px] grid-cols-2">
          <ToolButton name="viewPrev" size="size-3.5" />
          <ToolButton name="viewNext" size="size-3.5" />
        </div>
        <span className="mx-0.5 h-full border-l border-[#a0a0a0]" />
        <div className="grid w-[51px] grid-cols-3">
          <ToolButton name="copyView" size="size-4" />
          <ToolButton name="clipView" size="size-4" />
          <ToolButton name="maskView" size="size-4" />
        </div>
      </div>
      <div className="min-h-0 flex-1 overflow-hidden bg-black">
        <Drawing />
      </div>
    </main>
  )
}

function RotateDialog() {
  const [about, setAbout] = useState(false)
  const [copies, setCopies] = useState(false)
  const box = 'size-[15px] shrink-0 appearance-none border bg-white'

  return (
    <section className="absolute top-[259px] left-32 w-[210px] border border-[#4a9ad4] bg-[#f0f0f0] pb-2.5 text-[#222]">
      <div className="flex h-[25px] items-center bg-white pl-0.5">
        <Icon name="wrench" className="size-4" />
        <h2 className="ml-[3px] flex-1 font-['Open_Sans',sans-serif] text-[12px] text-[#333]">Rotate</h2>
        <svg viewBox="0 0 104 12" className="mr-[17px] h-3 w-[104px]" fill="none" stroke="#222" aria-hidden="true">
          <path d="M3 5.500h10M94 1l9 9M103 1l-9 9" />
          <path d="M48.500 1.500h8v8h-8z" stroke="#c4c4c4" />
        </svg>
      </div>
      <div className="flex flex-col gap-px pt-[3px] pl-1.5">
        <div className="flex h-[18px] items-center">
          <label htmlFor="method" className="w-[84px] text-right">
            <u>M</u>ethod:
          </label>
          <div className="ml-[7px] flex h-[15px] w-[91px] items-center border border-[#adadad] bg-[#dfdfdf] pr-1 pl-[3px]">
            <select id="method" className="h-full min-w-0 flex-1 appearance-none bg-transparent leading-3 outline-none">
              <option>3 points</option>
            </select>
            <Caret />
          </div>
        </div>
        <div className="flex h-[18px] items-center pl-[91px]">
          <input
            aria-label="Angle"
            readOnly
            value="150.0000°"
            className="h-4 w-[79px] border border-[#a9bdd2] bg-[#f0f0f0] pl-1 text-[#7a7a7a] outline-none"
          />
          <div className="ml-px flex flex-col gap-px">
            <button type="button" aria-label="Increase angle" className="flex h-[7px] w-4 items-center justify-center border border-[#b5b5b5]">
              <svg viewBox="0 0 6 3" className="h-[3px] w-1.5"><path d="M0 3h6L3 0z" /></svg>
            </button>
            <button type="button" aria-label="Decrease angle" className="flex h-[7px] w-4 items-center justify-center border border-[#b5b5b5]">
              <svg viewBox="0 0 6 3" className="h-[3px] w-1.5"><path d="M0 0h6L3 3z" /></svg>
            </button>
          </div>
        </div>
        <label className="flex h-[18px] items-center gap-[3px]">
          <input type="checkbox" checked={about} onChange={(e) => setAbout(e.target.checked)} className={`${box} border-[#333] checked:bg-[#333]`} />
          <span className="border border-dotted border-[#444] leading-[14px]">
            About Element C<u>e</u>nter
          </span>
        </label>
        <div className="flex h-[18px] items-center">
          <label className="flex w-[91px] items-center gap-1">
            <input type="checkbox" checked={copies} onChange={(e) => setCopies(e.target.checked)} className={`${box} border-[#333] checked:bg-[#333]`} />
            <span>
              <u>C</u>opies
            </span>
          </label>
          <input
            aria-label="Number of copies"
            readOnly
            value="1"
            className="h-4 w-[33px] border border-[#a9bdd2] bg-[#f0f0f0] pl-1 text-[#7a7a7a] outline-none"
          />
        </div>
        <div className="flex h-[18px] items-center text-[#808080]">
          <label className="flex w-[91px] items-center gap-1">
            <span className="grid size-[15px] shrink-0 place-items-center">
              <input type="checkbox" checked disabled readOnly className={`${box} col-start-1 row-start-1 border-[#c8c8c8]`} />
              <svg viewBox="0 0 10 8" className="col-start-1 row-start-1 h-2 w-2.5" fill="none" stroke="#bdbdbd" strokeWidth={1.5} aria-hidden="true">
                <path d="M1 4l3 3 5-6" />
              </svg>
            </span>
            <span>
              Use <u>F</u>ence:
            </span>
          </label>
          <div className="flex h-[15px] w-[89px] items-center bg-[#cccccc] px-1">
            <select aria-label="Fence mode" disabled className="h-full min-w-0 flex-1 appearance-none bg-transparent leading-3 text-[#7a7a7a] opacity-100">
              <option>Inside</option>
            </select>
            <Caret className="text-[#707070]" />
          </div>
        </div>
      </div>
    </section>
  )
}

const SNAPS = ['snapNear', 'snapKey', 'snapMid', 'snapCenter', 'snapOrigin', 'snapBisect', 'snapInt', 'snapTan', 'snapPerp']
const HATCHES = ['hatch', 'crossHatch', 'cloth', 'starLine', 'clothQ', 'clothUp', 'clothPen', 'clothX']
const TEXT_TOOLS = ['bigA', 'aLeader', 'bUp', 'abcCheck', 'abcQ', 'aUp', 'aMatch', 'oneTarget', 'a1a2', 'aEdge']

function BottomToolbars() {
  const [view, setView] = useState(1)

  return (
    <>
      <div className="flex h-[26px] shrink-0 overflow-hidden bg-[#f0f0f0]">
        <div className={`flex items-center pr-0.5 ${BAR}`}>
          <div className="-ml-[12px] grid w-[174px] grid-cols-8">
            {['dimA', 'dimB', 'dimC', 'dimBox', 'dimD', 'dimAngle', 'dimRadius', 'dimOrd'].map((name) => (
              <ToolButton key={name} name={name} />
            ))}
          </div>
          <Separator />
          <span className="ml-1 flex">
            <ToolButton name="groupStar" />
          </span>
        </div>
      </div>
      <div className="flex h-7 shrink-0 overflow-hidden border-b border-[#a5a5a5] bg-[#f0f0f0]">
        <div className={`flex shrink-0 items-center pr-1 ${BAR}`}>
          <Caret className="mr-1 text-[#777]" />
          <label className="flex h-5 w-[130px] items-center border border-[#c3c3c3] bg-[#e1e1e1] pr-1">
            <Icon name="layers" className="size-4" />
            <select aria-label="View group" className="min-w-0 flex-1 appearance-none bg-transparent pl-0.5 outline-none">
              <option>Default</option>
            </select>
            <Caret />
          </label>
          <span className="mx-1 flex items-center gap-0.5 self-stretch">
            <Separator />
            <ToolButton name="layers" />
          </span>
          <div className="grid h-5 w-[111px] grid-cols-8">
            {[1, 2, 3, 4, 5, 6, 7, 8].map((n) => (
              <button
                key={n}
                type="button"
                onClick={() => setView(n)}
                className={`border-r border-r-[#666] text-[12px] text-[#222] ${
                  n === view ? 'border-l border-l-[#a87b45] bg-linear-to-b from-[#f6bd6c] to-[#fde5ac]' : 'border-l border-l-white bg-[#e9e9e9]'
                }`}
              >
                {n}
              </button>
            ))}
          </div>
        </div>
        <div className={`ml-[3px] flex shrink-0 items-center ${BAR}`}>
          <Grip />
          <button type="button" title="AccuSnap" className="mx-0.5 border border-[#7f96b5] bg-linear-to-b from-[#f3b874] to-[#fbdf9c]">
            <Icon name="snapX" />
          </button>
          <Separator />
          <div className="grid w-[195px] grid-cols-9">
            {SNAPS.map((name) => (
              <ToolButton key={name} name={name} />
            ))}
          </div>
          <button type="button" title="Multi-snap" className="border border-[#6b85ad] bg-[#e0a860]">
            <Icon name="snapMulti" />
          </button>
        </div>
        <div className={`ml-1.5 flex shrink-0 items-center pr-2.5 ${BAR}`}>
          <Grip />
          <div className="mr-1 ml-1 flex items-center">
            <Icon name="lengthIcon" />
            <input aria-label="Length" readOnly value="28.9585" className="h-[17px] w-[139px] border border-[#b9b9b9] bg-white pl-[3px] text-[#777] outline-none" />
          </div>
          <Separator />
          <div className="ml-px flex items-center">
            <Icon name="angleIcon" />
            <input aria-label="Angle" readOnly value="-90.0000°" className="h-[17px] w-[139px] border border-[#b9b9b9] bg-white pl-[3px] text-[#777] outline-none" />
          </div>
        </div>
        <div className={`ml-1 flex shrink-0 items-center ${BAR}`}>
          <Grip />
          <div className="ml-[3px] grid w-[174px] grid-cols-8">
            {HATCHES.map((name) => (
              <ToolButton key={name} name={name} />
            ))}
          </div>
        </div>
        <div className={`ml-1 flex min-w-0 flex-1 items-center ${BAR}`}>
          <Grip />
          <div className="ml-0.5 grid w-[216px] shrink-0 grid-cols-10">
            {TEXT_TOOLS.map((name) => (
              <ToolButton key={name} name={name} />
            ))}
          </div>
        </div>
      </div>
    </>
  )
}

function StatusBar() {
  const cell = 'flex h-full shrink-0 items-center overflow-hidden border-t border-l border-t-[#a8a8a8] border-l-[#a8a8a8]'

  return (
    <footer className="flex h-6 shrink-0 items-center overflow-hidden bg-[#f0f0f0] text-[#222]">
      <p className="w-[201px] shrink-0 whitespace-nowrap">ter point to define amount of rotation</p>
      <Grip />
      <div className={`${cell} ml-1 w-[26px] items-start justify-end bg-[#f4f4f4]`}>
        <svg viewBox="0 0 6 3" className="mt-px h-[3px] w-1.5" aria-hidden="true">
          <path d="M0 3h6L3 0z" />
        </svg>
      </div>
      <div className="ml-auto flex h-full shrink-0 gap-0.5">
        <div className={`${cell} w-[26px]`} />
        <div className={`${cell} w-[26px] justify-center`}>
          <Icon name="lock" className="size-4" />
        </div>
        <div className={`${cell} w-[116px] pl-px`}>
          <span className="whitespace-nowrap">VR_TB_TRAFFIC_Lege</span>
        </div>
        <div className={`${cell} w-[103px] gap-2.5 pl-1`}>
          <Icon name="pointer" className="size-4" />
          <span>: 1</span>
        </div>
        <div className={`${cell} w-[26px]`} />
        <div className={`${cell} w-[26px]`} />
        <div className={`${cell} w-[25px] justify-center`}>
          <Icon name="disk" className="size-4" />
        </div>
        <div className={`${cell} w-[11px]`}>
          <Icon name="gear" className="size-4" />
        </div>
      </div>
    </footer>
  )
}

export default function App() {
  return (
    <div className="relative flex h-screen flex-col overflow-hidden bg-[#f0f0f0] font-['Liberation_Sans',sans-serif] text-[11px] text-[#222]">
      <MainToolbar />
      <div className="flex min-h-0 flex-1">
        <TaskPanel />
        <ViewWindow />
      </div>
      <BottomToolbars />
      <StatusBar />
      <RotateDialog />
    </div>
  )
}
